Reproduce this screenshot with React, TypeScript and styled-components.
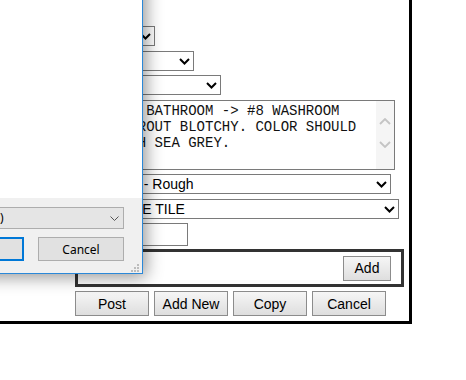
import React from "react";
import styled, { createGlobalStyle } from "styled-components";

const GlobalStyle = createGlobalStyle`
  html, body { margin: 0; padding: 0; background: #fff; overflow: hidden; }
  body { font-family: "Liberation Sans", Arial, sans-serif; }
  *, *::before, *::after { box-sizing: border-box; }
`;

const Page = styled.div`
  position: relative;
  width: 466px;
  height: 380px;
  overflow: hidden;
  background: #fff;
`;

const FormBox = styled.div`
  margin: -10px 0 0 -10px;
  width: 422px;
  border: 3px solid #000;
  padding: 33px 5px 5px 82px;
  display: flex;
  flex-direction: column;
  align-items: flex-start;
  font: 14px "Liberation Sans", Arial, sans-serif;
  color: #000;
`;

const Row = styled.div<{ $mt: number }>`
  margin-top: ${(p) => p.$mt}px;
  display: flex;
`;

const SelectBox = styled.div<{ $w: number }>`
  width: ${(p) => p.$w}px;
  height: 20px;
  border: 1px solid #7a7a7a;
  background: #fff;
  display: flex;
  align-items: center;
  padding: 0 3px 0 4px;
`;

const SelectText = styled.span`
  flex: 1;
  white-space: nowrap;
  overflow: hidden;
  line-height: 18px;
`;

const TextArea = styled.div`
  width: 320px;
  height: 70px;
  border: 1px solid #7a7a7a;
  background: #fff;
  display: flex;
`;

const TextBody = styled.div`
  flex: 1;
  padding: 2px 3px;
  font: 14px "Liberation Mono", "Courier New", monospace;
  line-height: 16px;
  white-space: pre;
  overflow: hidden;
  color: #111;
`;

const ScrollTrack = styled.div`
  width: 18px;
  background: #f5f5f5;
  display: flex;
  flex-direction: column;
  align-items: center;
  padding-top: 17px;
  gap: 16px;
`;

const TextInput = styled.div`
  width: 113px;
  height: 23px;
  border: 1px solid #7a7a7a;
  background: #fff;
`;

const AddBox = styled.div`
  width: 329px;
  height: 38px;
  border: 3px solid #333;
  display: flex;
  align-items: center;
  justify-content: flex-end;
  padding-right: 10px;
`;

const FormButton = styled.button<{ $w: number }>`
  width: ${(p) => p.$w}px;
  height: 25px;
  padding: 0;
  border: 1px solid #8c8c8c;
  border-radius: 0;
  background: linear-gradient(#f6f6f6, #dedede);
  font: 14px "Liberation Sans", Arial, sans-serif;
  color: #000;
`;

const ButtonRow = styled.div`
  display: flex;
  gap: 5px;
`;

const Dialog = styled.div`
  position: absolute;
  left: -240px;
  top: -150px;
  width: 383px;
  height: 424px;
  border: 1px solid #2b88d8;
  background: #fff;
  display: flex;
  flex-direction: column;
  box-shadow: 3px 3px 16px rgba(0, 0, 0, 0.42);
  font: 12px "Noto Sans", "Open Sans", sans-serif;
  color: #000;
`;

const DialogBody = styled.div`
  flex: 1;
  background: #fff;
`;

const DialogFooter = styled.div`
  position: relative;
  height: 75px;
  background: #f0f0f0;
  padding: 9px 18px 0 10px;
  display: flex;
  flex-direction: column;
  align-items: flex-end;
  gap: 8px;
`;

const FilterSelect = styled.div<{ $w: number }>`
  width: ${(p) => p.$w}px;
  height: 22px;
  border: 1px solid #adadad;
  background: #e5e5e5;
  display: flex;
  align-items: center;
  padding: 0 4px 0 4px;
`;

const DialogButtons = styled.div`
  display: flex;
  gap: 14px;
`;

const DialogButton = styled.button<{ $primary?: boolean }>`
  width: 86px;
  height: 24px;
  padding: 0;
  border-radius: 0;
  background: #e1e1e1;
  border: ${(p) => (p.$primary ? "2px solid #0078d7" : "1px solid #adadad")};
  font: 12px "Noto Sans", "Open Sans", sans-serif;
  color: #000;
`;

const Grip = styled.svg`
  position: absolute;
  right: 3px;
  bottom: 1px;
`;

const Chevron = () => (
  <svg width="11" height="7" viewBox="0 0 11 7">
    <path d="M1 1 L5.5 5.5 L10 1" stroke="#000" strokeWidth="2" fill="none" />
  </svg>
);

const ThinChevron = () => (
  <svg width="9" height="5" viewBox="0 0 9 5">
    <path d="M0.5 0.5 L4.5 4.5 L8.5 0.5" stroke="#555" strokeWidth="1" fill="none" />
  </svg>
);

const ScrollArrow = ({ up }: { up?: boolean }) => (
  <svg width="12" height="7" viewBox="0 0 12 7">
    <path
      d={up ? "M1 6 L6 1 L11 6" : "M1 1 L6 6 L11 1"}
      stroke="#c4c4c4"
      strokeWidth="1.8"
      fill="none"
    />
  </svg>
);

const Select = ({ w, text }: { w: number; text: string }) => (
  <SelectBox $w={w}>
    <SelectText>{text}</SelectText>
    <Chevron />
  </SelectBox>
);

const noteLines = [
  "FROM #7 BATHROOM -> #8 WASHROOM",
  "FLOOR GROUT BLOTCHY. COLOR SHOULD",
  "BE MATCH SEA GREY.",
];

export default function App() {
  return (
    <>
      <GlobalStyle />
      <Page>
        <FormBox>
          <Row $mt={0}>
            <Select w={80} text="Yes" />
          </Row>
          <Row $mt={5}>
            <Select w={119} text="Interior" />
          </Row>
          <Row $mt={4}>
            <Select w={146} text="Bathroom" />
          </Row>
          <Row $mt={5}>
            <TextArea>
              <TextBody>{noteLines.join("\n")}</TextBody>
              <ScrollTrack>
                <ScrollArrow up />
                <ScrollArrow />
              </ScrollTrack>
            </TextArea>
          </Row>
          <Row $mt={4}>
            <Select w={316} text="Texture C - Rough" />
          </Row>
          <Row $mt={5}>
            <Select w={324} text="C MARBLE TILE" />
          </Row>
          <Row $mt={4}>
            <TextInput />
          </Row>
          <Row $mt={3}>
            <AddBox>
              <FormButton $w={48}>Add</FormButton>
            </AddBox>
          </Row>
          <Row $mt={4}>
            <ButtonRow>
              <FormButton $w={74}>Post</FormButton>
              <FormButton $w={74}>Add New</FormButton>
              <FormButton $w={74}>Copy</FormButton>
              <FormButton $w={74}>Cancel</FormButton>
            </ButtonRow>
          </Row>
        </FormBox>

        <Dialog>
          <DialogBody />
          <DialogFooter>
            <FilterSelect $w={194}>
              <SelectText>All Files (*.*)</SelectText>
              <ThinChevron />
            </FilterSelect>
            <DialogButtons>
              <DialogButton $primary>Open</DialogButton>
              <DialogButton>Cancel</DialogButton>
            </DialogButtons>
            <Grip width="8" height="8" viewBox="0 0 8 8">
              <rect x="6" y="0" width="2" height="2" fill="#bcbcbc" />
              <rect x="3" y="3" width="2" height="2" fill="#bcbcbc" />
              <rect x="6" y="3" width="2" height="2" fill="#bcbcbc" />
              <rect x="0" y="6" width="2" height="2" fill="#bcbcbc" />
              <rect x="3" y="6" width="2" height="2" fill="#bcbcbc" />
              <rect x="6" y="6" width="2" height="2" fill="#bcbcbc" />
            </Grip>
          </DialogFooter>
        </Dialog>
      </Page>
    </>
  );
}
